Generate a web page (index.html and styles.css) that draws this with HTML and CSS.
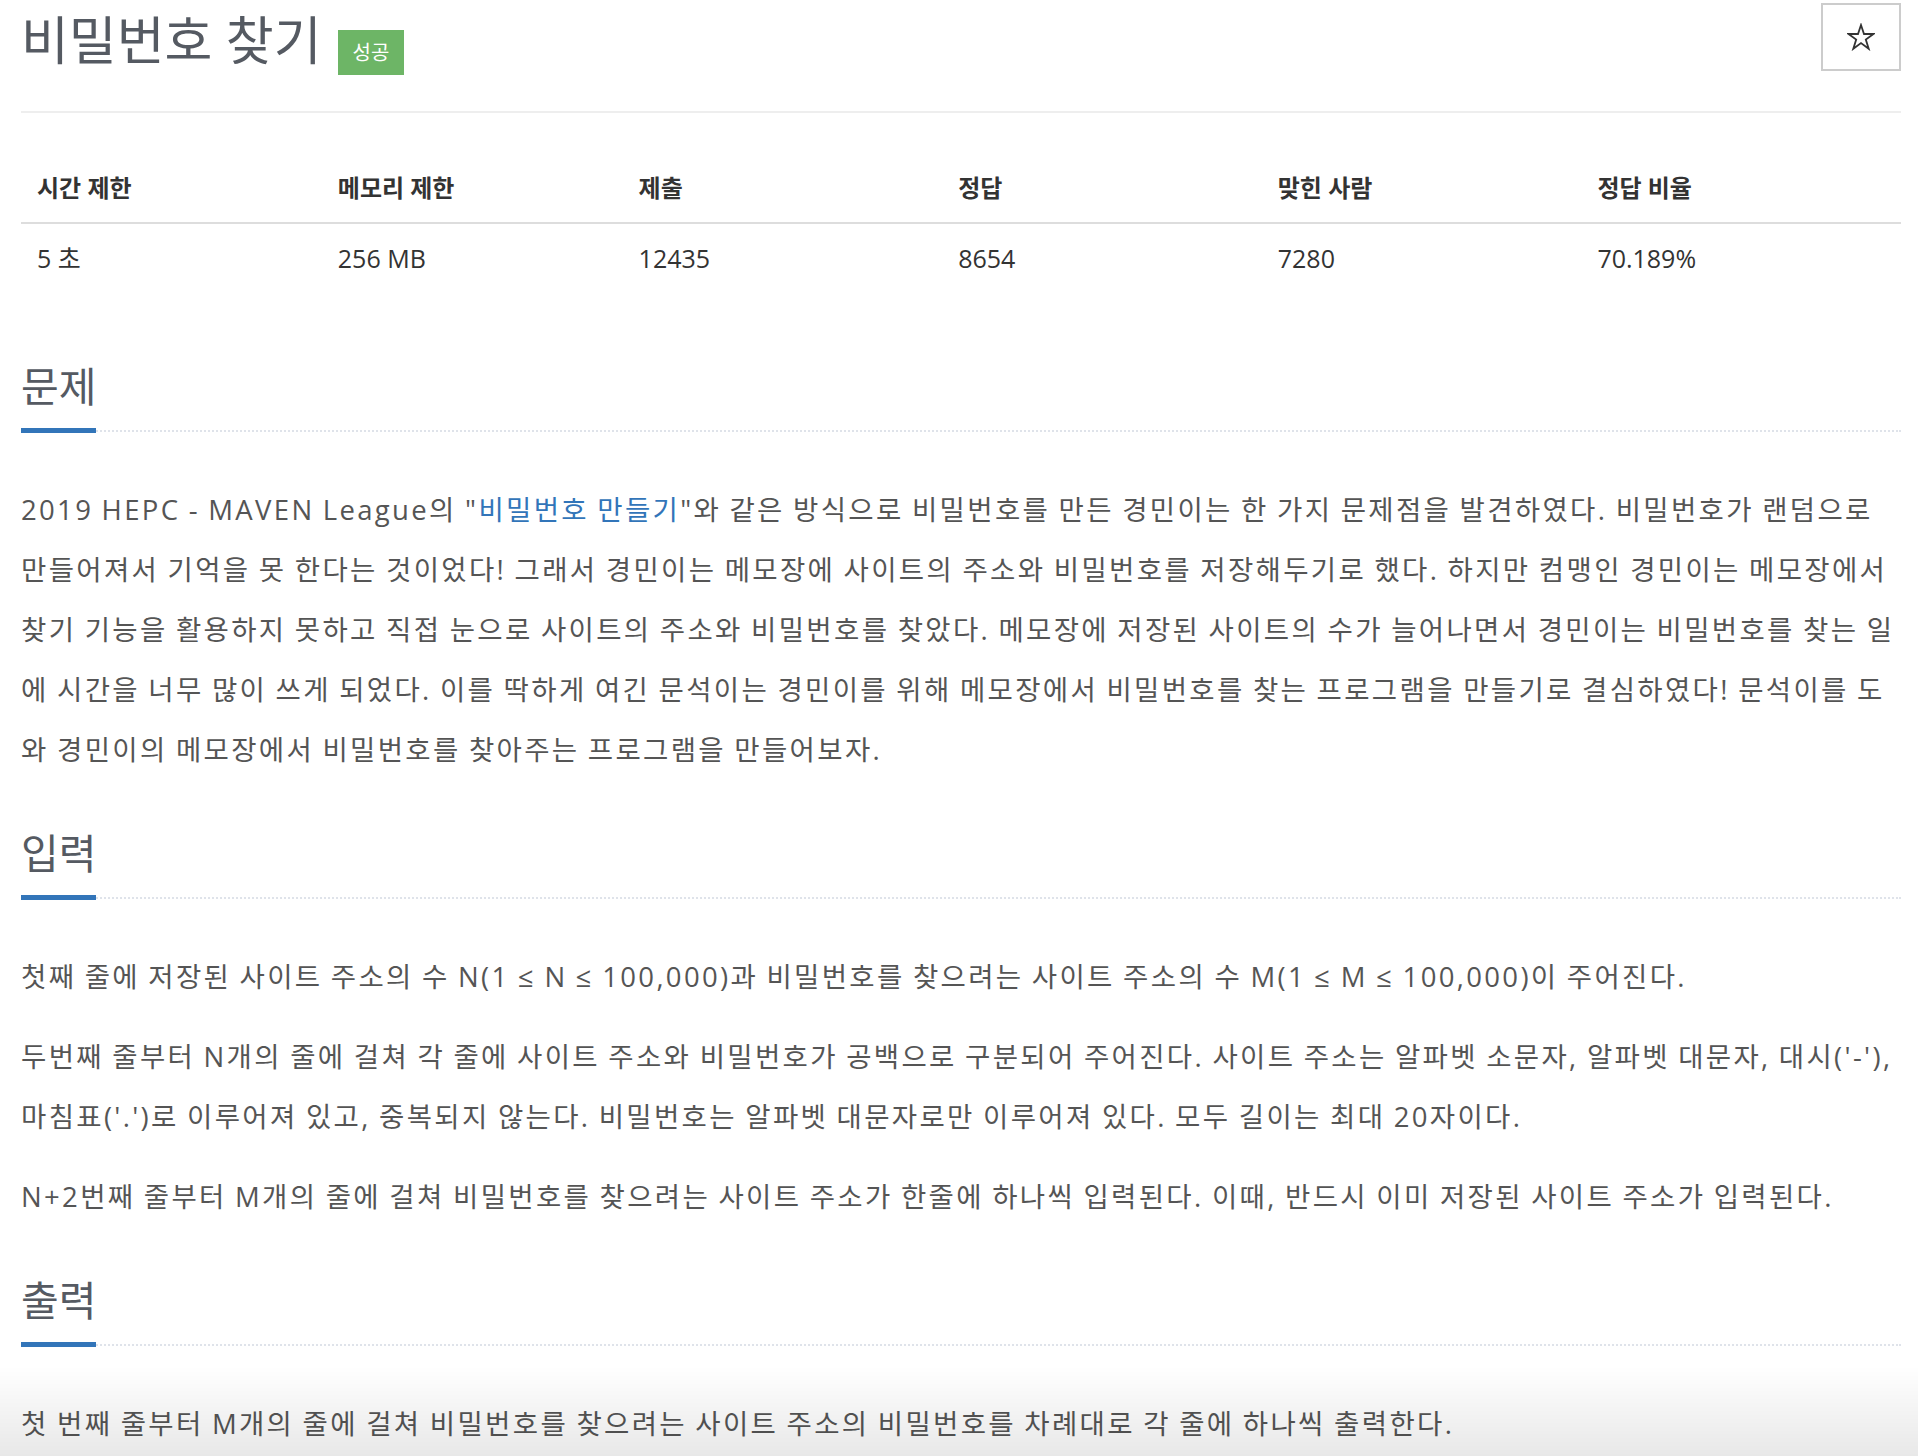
FILE: index.html
```html
<!DOCTYPE html>
<html lang="ko">
<head>
  <meta charset="UTF-8" />
  <title>비밀번호 찾기</title>
  <meta name="viewport" content="width=device-width, initial-scale=1.0" />
  <link rel="stylesheet" href="styles.css">
</head>
<body>
  <div class="container">
    <!-- Title -->
    <div class="page-header">
      <h1>비밀번호 찾기 <span class="label-success">성공</span></h1>
      <button class="star-btn" title="즐겨찾기">
        <svg width="28" height="28" viewBox="0 0 28 28">
          <polygon points="14,2 17,11 26.5,11 18.8,16.6 21.7,25.8 14,20.1 6.3,25.8 9.2,16.6 1.5,11 11,11"
                   fill="none" stroke="#333" stroke-width="1.8" stroke-linejoin="miter" />
        </svg>
      </button>
    </div>

    <!-- Limits -->
    <table class="problem-info">
      <colgroup>
        <col class="col-narrow"><col class="col-narrow">
        <col class="col-wide"><col class="col-wide"><col class="col-wide"><col class="col-wide">
      </colgroup>
      <thead>
        <tr>
          <th>시간 제한</th>
          <th>메모리 제한</th>
          <th>제출</th>
          <th>정답</th>
          <th>맞힌 사람</th>
          <th>정답 비율</th>
        </tr>
      </thead>
      <tbody>
        <tr>
          <td>5 초</td>
          <td>256 MB</td>
          <td>12435</td>
          <td>8654</td>
          <td>7280</td>
          <td>70.189%</td>
        </tr>
      </tbody>
    </table>

    <!-- 문제 -->
    <section class="problem-section">
      <div class="headline">
        <h2>문제</h2>
      </div>
      <div class="problem-text">
        <p>2019 HEPC - MAVEN League의 "<a href="#">비밀번호 만들기</a>"와 같은 방식으로 비밀번호를 만든 경민이는 한 가지 문제점을 발견하였다. 비밀번호가 랜덤으로 만들어져서 기억을 못 한다는 것이었다! 그래서 경민이는 메모장에 사이트의 주소와 비밀번호를 저장해두기로 했다. 하지만 컴맹인 경민이는 메모장에서 찾기 기능을 활용하지 못하고 직접 눈으로 사이트의 주소와 비밀번호를 찾았다. 메모장에 저장된 사이트의 수가 늘어나면서 경민이는 비밀번호를 찾는 일에 시간을 너무 많이 쓰게 되었다. 이를 딱하게 여긴 문석이는 경민이를 위해 메모장에서 비밀번호를 찾는 프로그램을 만들기로 결심하였다! 문석이를 도와 경민이의 메모장에서 비밀번호를 찾아주는 프로그램을 만들어보자.</p>
      </div>
    </section>

    <!-- 입력 -->
    <section class="problem-section">
      <div class="headline">
        <h2>입력</h2>
      </div>
      <div class="problem-text">
        <p>첫째 줄에 저장된 사이트 주소의 수 N(1 ≤ N ≤ 100,000)과 비밀번호를 찾으려는 사이트 주소의 수 M(1 ≤ M ≤ 100,000)이 주어진다.</p>
        <p>두번째 줄부터 N개의 줄에 걸쳐 각 줄에 사이트 주소와 비밀번호가 공백으로 구분되어 주어진다. 사이트 주소는 알파벳 소문자, 알파벳 대문자, 대시('-'), 마침표('.')로 이루어져 있고, 중복되지 않는다. 비밀번호는 알파벳 대문자로만 이루어져 있다. 모두 길이는 최대 20자이다.</p>
        <p>N+2번째 줄부터 M개의 줄에 걸쳐 비밀번호를 찾으려는 사이트 주소가 한줄에 하나씩 입력된다. 이때, 반드시 이미 저장된 사이트 주소가 입력된다.</p>
      </div>
    </section>

    <!-- 출력 -->
    <section class="problem-section">
      <div class="headline">
        <h2>출력</h2>
      </div>
      <div class="problem-text">
        <p>첫 번째 줄부터 M개의 줄에 걸쳐 비밀번호를 찾으려는 사이트 주소의 비밀번호를 차례대로 각 줄에 하나씩 출력한다.</p>
      </div>
    </section>
  </div>

  <div class="page-fade"></div>
</body>
</html>
```

FILE: styles.css
```css
:root {
  --title: #555a62;
  --text: #555;
  --dark: #333;
  --blue: #3275b9;
  --line: #eee;
}

* { box-sizing: border-box; }

body {
  font-family: "Open Sans", "Noto Sans CJK KR", sans-serif;
  background-color: #fff;
  color: var(--dark);
  margin: 0;
  padding: 0;
}

.container {
  padding: 0 17px 0 21px;
}

/* title row */
.page-header {
  display: flex;
  justify-content: space-between;
  align-items: flex-start;
  height: 113px;
  border-bottom: 2px solid var(--line);
}

.page-header h1 {
  margin: 12px 0 0;
  font-size: 52px;
  line-height: 56px;
  font-weight: normal;
  color: var(--title);
}

.label-success {
  display: inline-block;
  margin-left: 3px;
  padding: 13px 14.5px;
  font-size: 20px;
  line-height: 19px;
  color: #fff;
  background-color: #6db566;
}

.star-btn {
  margin-top: 3px;
  width: 80px;
  height: 68px;
  display: flex;
  align-items: center;
  justify-content: center;
  background-color: #fff;
  border: 2px solid #ccc;
  padding: 0;
  cursor: pointer;
}

/* limits table */
.problem-info {
  width: 100%;
  margin: 41px 0 72px;
  border-collapse: collapse;
  table-layout: fixed;
}

.col-narrow { width: 16%; }
.col-wide { width: 17%; }

.problem-info th {
  text-align: left;
  padding: 16px;
  font-size: 24px;
  line-height: 36px;
  font-weight: bold;
  border-bottom: 2px solid #ddd;
}

.problem-info td {
  padding: 16px;
  font-size: 25px;
  line-height: 36px;
}

/* sections */
.problem-section + .problem-section {
  margin-top: 51px;
}

.headline {
  display: flex;
  align-items: flex-start;
  margin-bottom: 48px;
  border-bottom: 2px dotted #dfe3ea;
}

.headline h2 {
  margin: 0 0 -3px;
  padding-bottom: 20px;
  font-size: 41px;
  line-height: 44px;
  font-weight: normal;
  color: var(--title);
  border-bottom: 5px solid var(--blue);
}

.problem-text p {
  margin: 0 0 20px;
  font-size: 27.5px;
  line-height: 60px;
  letter-spacing: 2.33px;
  word-spacing: -1.1px;
  color: var(--text);
}

.problem-text a {
  color: var(--blue);
  text-decoration: none;
}

.page-fade {
  position: fixed;
  left: 0;
  right: 0;
  bottom: 0;
  height: 90px;
  background: linear-gradient(rgba(0, 0, 0, 0), rgba(0, 0, 0, 0.09));
  pointer-events: none;
}
```
